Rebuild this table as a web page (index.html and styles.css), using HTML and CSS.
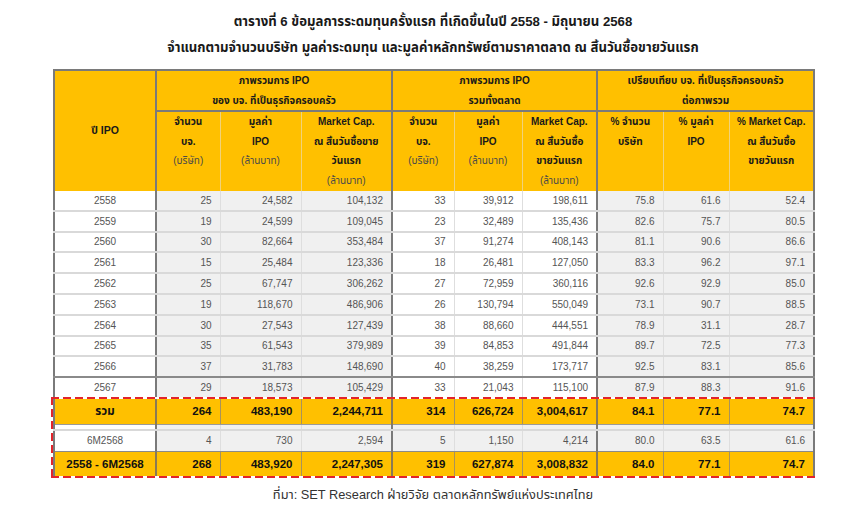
FILE: index.html
```html
<!DOCTYPE html>
<html lang="th">
<head>
<meta charset="utf-8">
<title>ตารางที่ 6</title>
<link rel="stylesheet" href="styles.css">
</head>
<body>
<div class="page">
  <div class="title">
    <div>ตารางที่ 6 ข้อมูลการระดมทุนครั้งแรก ที่เกิดขึ้นในปี 2558 - มิถุนายน 2568</div>
    <div>จำแนกตามจำนวนบริษัท มูลค่าระดมทุน และมูลค่าหลักทรัพย์ตามราคาตลาด ณ สิ้นวันซื้อขายวันแรก</div>
  </div>

  <table class="grid main">
    <colgroup>
      <col class="w1"><col class="w2"><col class="w3"><col class="w4"><col class="w5"><col class="w6"><col class="w7"><col class="w8"><col class="w9"><col class="w10">
    </colgroup>
    <thead>
      <tr class="h1">
        <th rowspan="2" class="year-h">ปี IPO</th>
        <th colspan="3" class="gl">ภาพรวมการ IPO<br>ของ บจ. ที่เป็นธุรกิจครอบครัว</th>
        <th colspan="3" class="gl">ภาพรวมการ IPO<br>รวมทั้งตลาด</th>
        <th colspan="3" class="gl">เปรียบเทียบ บจ. ที่เป็นธุรกิจครอบครัว<br>ต่อภาพรวม</th>
      </tr>
      <tr class="h2">
        <th class="gl">จำนวน<br>บจ.<br><span class="unit">(บริษัท)</span></th>
        <th>มูลค่า<br>IPO<br><span class="unit">(ล้านบาท)</span></th>
        <th>Market Cap.<br>ณ สิ้นวันซื้อขาย<br>วันแรก<br><span class="unit">(ล้านบาท)</span></th>
        <th class="gl">จำนวน<br>บจ.<br><span class="unit">(บริษัท)</span></th>
        <th>มูลค่า<br>IPO<br><span class="unit">(ล้านบาท)</span></th>
        <th>Market Cap.<br>ณ สิ้นวันซื้อ<br>ขายวันแรก<br><span class="unit">(ล้านบาท)</span></th>
        <th class="gl">% จำนวน<br>บริษัท</th>
        <th>% มูลค่า<br>IPO</th>
        <th>% Market Cap.<br>ณ สิ้นวันซื้อ<br>ขายวันแรก</th>
      </tr>
    </thead>
    <tbody>
      <tr><td class="yr">2558</td><td class="g gl">25</td><td class="g">24,582</td><td class="g">104,132</td><td class="gl">33</td><td>39,912</td><td>198,611</td><td class="g gl">75.8</td><td class="g">61.6</td><td class="g">52.4</td></tr>
      <tr><td class="yr">2559</td><td class="g gl">19</td><td class="g">24,599</td><td class="g">109,045</td><td class="gl">23</td><td>32,489</td><td>135,436</td><td class="g gl">82.6</td><td class="g">75.7</td><td class="g">80.5</td></tr>
      <tr><td class="yr">2560</td><td class="g gl">30</td><td class="g">82,664</td><td class="g">353,484</td><td class="gl">37</td><td>91,274</td><td>408,143</td><td class="g gl">81.1</td><td class="g">90.6</td><td class="g">86.6</td></tr>
      <tr><td class="yr">2561</td><td class="g gl">15</td><td class="g">25,484</td><td class="g">123,336</td><td class="gl">18</td><td>26,481</td><td>127,050</td><td class="g gl">83.3</td><td class="g">96.2</td><td class="g">97.1</td></tr>
      <tr><td class="yr">2562</td><td class="g gl">25</td><td class="g">67,747</td><td class="g">306,262</td><td class="gl">27</td><td>72,959</td><td>360,116</td><td class="g gl">92.6</td><td class="g">92.9</td><td class="g">85.0</td></tr>
      <tr><td class="yr">2563</td><td class="g gl">19</td><td class="g">118,670</td><td class="g">486,906</td><td class="gl">26</td><td>130,794</td><td>550,049</td><td class="g gl">73.1</td><td class="g">90.7</td><td class="g">88.5</td></tr>
      <tr><td class="yr">2564</td><td class="g gl">30</td><td class="g">27,543</td><td class="g">127,439</td><td class="gl">38</td><td>88,660</td><td>444,551</td><td class="g gl">78.9</td><td class="g">31.1</td><td class="g">28.7</td></tr>
      <tr><td class="yr">2565</td><td class="g gl">35</td><td class="g">61,543</td><td class="g">379,989</td><td class="gl">39</td><td>84,853</td><td>491,844</td><td class="g gl">89.7</td><td class="g">72.5</td><td class="g">77.3</td></tr>
      <tr class="before-last"><td class="yr">2566</td><td class="g gl">37</td><td class="g">31,783</td><td class="g">148,690</td><td class="gl">40</td><td>38,259</td><td>173,717</td><td class="g gl">92.5</td><td class="g">83.1</td><td class="g">85.6</td></tr>
      <tr class="last"><td class="yr">2567</td><td class="g gl">29</td><td class="g">18,573</td><td class="g">105,429</td><td class="gl">33</td><td>21,043</td><td>115,100</td><td class="g gl">87.9</td><td class="g">88.3</td><td class="g">91.6</td></tr>
    </tbody>
  </table>

  <div class="highlight">
    <table class="grid totals">
      <colgroup>
        <col class="w1"><col class="w2"><col class="w3"><col class="w4"><col class="w5"><col class="w6"><col class="w7"><col class="w8"><col class="w9"><col class="w10">
      </colgroup>
      <tbody>
        <tr class="sum"><td class="yr">รวม</td><td class="gl">264</td><td>483,190</td><td>2,244,711</td><td class="gl">314</td><td>626,724</td><td>3,004,617</td><td class="gl">84.1</td><td>77.1</td><td>74.7</td></tr>
        <tr class="spacer"><td></td><td class="g gl"></td><td class="g"></td><td class="g"></td><td class="g gl"></td><td class="g"></td><td class="g"></td><td class="g gl"></td><td class="g"></td><td class="g"></td></tr>
        <tr class="half"><td class="yr">6M2568</td><td class="g gl">4</td><td class="g">730</td><td class="g">2,594</td><td class="g gl">5</td><td class="g">1,150</td><td class="g">4,214</td><td class="g gl">80.0</td><td class="g">63.5</td><td class="g">61.6</td></tr>
        <tr class="sum final"><td class="yr">2558 - 6M2568</td><td class="gl">268</td><td>483,920</td><td>2,247,305</td><td class="gl">319</td><td>627,874</td><td>3,008,832</td><td class="gl">84.0</td><td>77.1</td><td>74.7</td></tr>
      </tbody>
    </table>
  </div>

  <div class="source">ที่มา: SET Research ฝ่ายวิจัย ตลาดหลักทรัพย์แห่งประเทศไทย</div>
</div>
</body>
</html>
```

FILE: styles.css
```css
body {
  margin: 0;
  background: #ffffff;
  font-family: "Liberation Sans", Tahoma, "Noto Sans Thai", "Noto Sans", sans-serif;
  color: #222222;
}

.page {
  width: 764px;
  margin-left: 51px;
}

.title {
  padding-top: 9px;
  margin-bottom: 8px;
  text-align: center;
  font-weight: bold;
  font-size: 13.2px;
  line-height: 26px;
  color: #1a1a1a;
}

.grid {
  width: 760px;
  margin: 0 2px;
  border-collapse: collapse;
  table-layout: fixed;
}

.w1 { width: 102px; }
.w2 { width: 64px; }
.w3 { width: 81px; }
.w4 { width: 91px; }
.w5 { width: 62px; }
.w6 { width: 68px; }
.w7 { width: 75px; }
.w8 { width: 66px; }
.w9 { width: 66px; }
.w10 { width: 85px; }

/* header */
.grid th {
  background: #ffc000;
  color: #1a1a1a;
  font-size: 10px;
  font-weight: bold;
  line-height: 19.5px;
  padding: 0;
  text-align: center;
  vertical-align: top;
  border-left: 1px solid #f1d27a;
}

.main {
  border-top: 2px solid #7a7a7a;
  border-left: 2px solid #7a7a7a;
  border-right: 2px solid #7a7a7a;
}

.h1 th {
  height: 38px;
  vertical-align: middle;
  border-bottom: 2px solid #7a7a7a;
}

.h1 th.year-h {
  vertical-align: middle;
  font-size: 10.5px;
  border-bottom: none;
}

.h2 th {
  height: 79px;
}

.unit {
  font-weight: normal;
  color: #4a4a4a;
}

.grid .gl {
  border-left: 2px solid #7a7a7a;
}

/* body rows */
.grid td {
  height: 18.8px;
  padding: 0 8px 0 0;
  font-size: 10px;
  color: #555555;
  text-align: right;
  background: #ffffff;
  border-left: 1px solid #dedede;
  border-bottom: 2px solid #d9d9d9;
}

.grid td.g {
  background: #f0f0f0;
}

.grid td.yr {
  text-align: center;
  padding: 0;
  border-left: none;
}

.grid .before-last td {
  border-bottom: 2px solid #8a8a8a;
}

.grid .last td {
  border-bottom: none;
}

/* highlighted totals */
.highlight {
  padding: 2px 0;
  background:
    repeating-linear-gradient(90deg, #e2242b 0 8px, transparent 8px 12px) top left / 100% 2px no-repeat,
    repeating-linear-gradient(90deg, #e2242b 0 8px, transparent 8px 12px) bottom left / 100% 2px no-repeat,
    repeating-linear-gradient(180deg, #e2242b 0 8px, transparent 8px 12px) top left / 2px 100% no-repeat,
    repeating-linear-gradient(180deg, #e2242b 0 8px, transparent 8px 12px) top right / 2px 100% no-repeat;
}

.totals {
  border-left: 2px solid #7a7a7a;
  border-right: 2px solid #7a7a7a;
}

.grid .sum td {
  height: 25px;
  background: #ffc000;
  color: #111111;
  font-size: 11.5px;
  font-weight: bold;
  border-left: 1px solid #a8925a;
  border-bottom: 1px solid #9a9a9a;
}

.grid .sum td.gl {
  border-left: 2px solid #8a7a55;
}

.grid .sum td.yr {
  border-left: none;
}

.grid .final td {
  height: 24px;
  border-bottom: none;
}

.grid .spacer td {
  height: 4px;
  padding: 0;
  border-bottom: 2px solid #d9d9d9;
}

.grid .half td {
  height: 20px;
  border-bottom: 1px solid #8a8a8a;
}

.source {
  margin-top: 8px;
  text-align: center;
  font-size: 12.8px;
  line-height: 18px;
  color: #333333;
}
```
